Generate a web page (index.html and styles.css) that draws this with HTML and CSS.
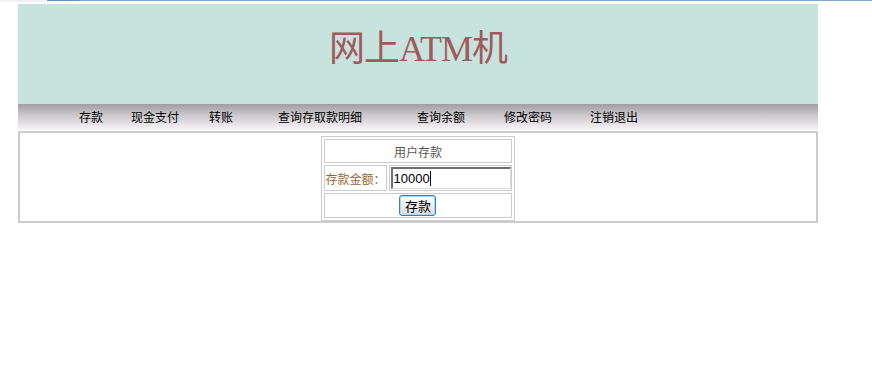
FILE: index.html
```html
<!DOCTYPE html>
<html lang="zh-CN">
<head>
<meta charset="utf-8">
<title>网上ATM机</title>
<link rel="stylesheet" href="styles.css">
</head>
<body>
<div class="topbar"><span class="tb-grey"></span><span class="tb-dark"></span><span class="tb-blue"></span></div>
<div class="page">
  <div class="header"><h1 class="title">网上ATM机</h1></div>
  <nav class="nav">
    <a>存款</a>
    <a>现金支付</a>
    <a>转账</a>
    <a>查询存取款明细</a>
    <a>查询余额</a>
    <a>修改密码</a>
    <a>注销退出</a>
  </nav>
  <div class="box">
    <table class="form">
      <tr><td colspan="2" class="caption">用户存款</td></tr>
      <tr>
        <td class="label">存款金额：</td>
        <td class="field"><span class="input">10000<span class="caret"></span></span></td>
      </tr>
      <tr><td colspan="2" class="actions"><button class="btn">存款</button></td></tr>
    </table>
  </div>
</div>
</body>
</html>
```
FILE: styles.css
```css
html, body {
  margin: 0;
  padding: 0;
  background: #fff;
}
body {
  font-family: "Noto Sans CJK SC", "Liberation Sans", sans-serif;
  font-size: 12px;
}
.topbar {
  height: 4px;
  display: flex;
  align-items: flex-start;
}
.tb-grey { width: 47px; height: 2px; background: #f2f2f2; }
.tb-dark { width: 32px; height: 1px; background: #6593bd; }
.tb-blue { flex: 1; height: 1px; background: #80a8ca; }
.page {
  width: 800px;
  margin-left: 18px;
}
.header {
  height: 100px;
  background: #c6e3de;
  display: flex;
  justify-content: center;
}
.title {
  margin: 0;
  padding-top: 25px;
  font-family: "Liberation Serif", "Noto Sans CJK SC", serif;
  font-weight: normal;
  font-size: 36px;
  line-height: 40px;
  color: #a05a5c;
  letter-spacing: -1px;
}
.nav {
  height: 26px;
  background: linear-gradient(#a09ea0, #cccacc 45%, #f8f5f8);
  display: grid;
  grid-template-columns: 52px 78px 69px 139px 87px 86px auto;
  padding-left: 61px;
  align-items: center;
}
.nav a {
  color: #000;
  font-size: 12px;
  line-height: 14px;
  white-space: nowrap;
  cursor: pointer;
}
.box {
  margin-top: 1px;
  border: 2px solid #cccccc;
  padding: 3px 0 0;
  display: flex;
  justify-content: center;
}
.form {
  width: 192px;
  border: 1px solid #cccccc;
  border-spacing: 2px;
}
.form td {
  border: 1px solid #cccccc;
  padding: 0;
}
.caption {
  height: 22px;
  text-align: center;
  color: #555;
  font-size: 12px;
}
.label {
  height: 24px;
  width: 59px;
  color: #996633;
  font-size: 12px;
  white-space: nowrap;
}
.field {
  padding: 0 0 0 1px !important;
}
.input {
  display: flex;
  align-items: center;
  box-sizing: border-box;
  width: 120px;
  height: 22px;
  border-top: 2px solid #6f6f6f;
  border-left: 2px solid #6f6f6f;
  border-right: 1px solid #d8d8d8;
  border-bottom: 1px solid #d8d8d8;
  padding-left: 1px;
  font-family: "Liberation Sans", sans-serif;
  font-size: 13px;
  color: #000;
}
.caret {
  display: inline-block;
  width: 1px;
  height: 15px;
  background: #000;
}
.actions {
  height: 23px;
  text-align: center;
}
.btn {
  width: 37px;
  height: 21px;
  padding: 0;
  border: 1px solid #3c7fb1;
  border-radius: 3px;
  background: linear-gradient(#ffffff, #f0f0f0 50%, #dcdcdc);
  box-shadow: inset 0 0 0 1px #a8d8f0;
  font-family: "Noto Sans CJK SC", sans-serif;
  font-size: 13px;
  line-height: 18px;
  color: #000;
  vertical-align: middle;
}
```
